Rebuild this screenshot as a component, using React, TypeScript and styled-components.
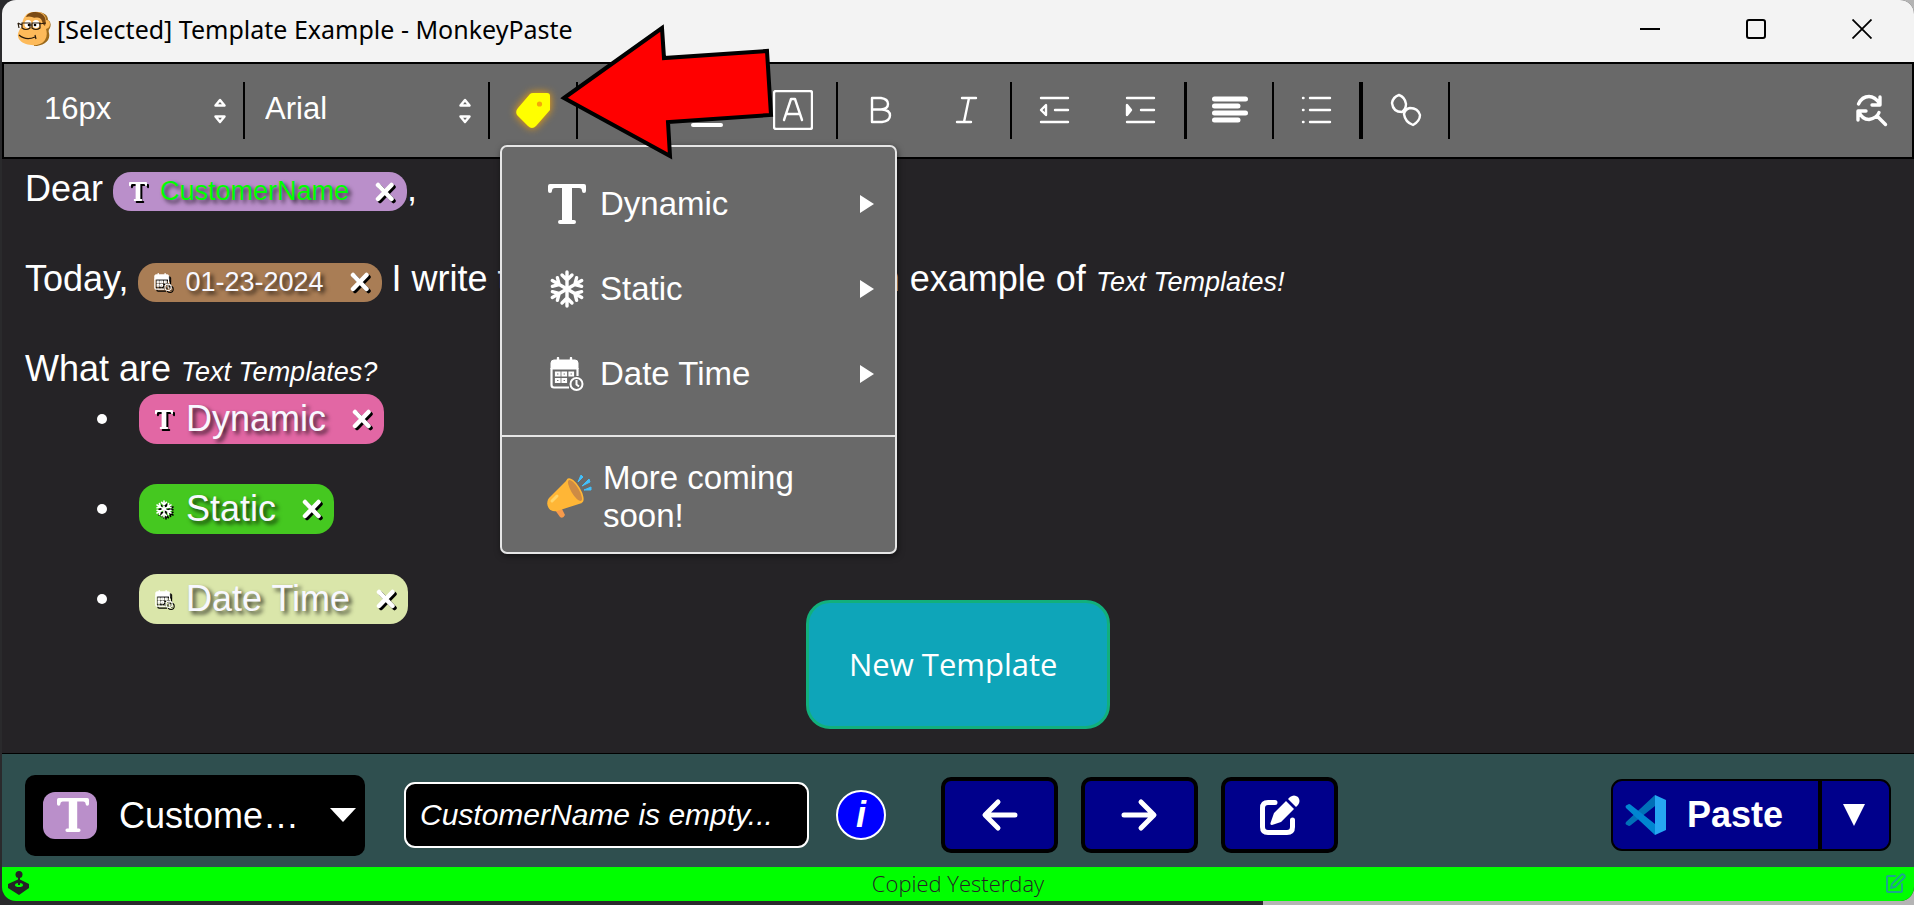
import React from 'react';
import styled, { createGlobalStyle } from 'styled-components';

const sans = '"Liberation Sans", Arial, sans-serif';
const ui = '"Noto Sans", "Segoe UI", sans-serif';
const rounded = '"Open Sans", Nunito, sans-serif';

const Global = createGlobalStyle`
  *, *::before, *::after { box-sizing: border-box; }
  body { margin: 0; background: #1f1f1f; }
  button, input, select { font-family: inherit; color: inherit; margin: 0; }
  p, ul { margin: 0; padding: 0; }
`;

const Desktop = styled.div`
  display: flex;
  min-height: 100vh;
  padding: 0 0 4px 2px;
  background: linear-gradient(to right, #2a2a2c 66%, #b4b4b4 66%);
  font-family: ${sans};
  color: #fff;
`;

const Window = styled.main`
  position: relative;
  flex: 1;
  min-width: 0;
  display: flex;
  flex-direction: column;
  overflow: hidden;
  border-radius: 14px;
  background: #252326;
`;

const TitleBar = styled.header`
  display: flex;
  align-items: center;
  height: 62px;
  padding: 0 21px 4px 15px;
  background: #f3f3f3;
  color: #000;
`;

const Title = styled.h1`
  flex: 1;
  margin: 0;
  padding-left: 6px;
  font: 400 25px/58px ${ui};
  white-space: nowrap;
`;

const WindowButton = styled.button`
  display: grid;
  place-items: center;
  width: 106px;
  height: 58px;
  padding: 0;
  border: 0;
  background: none;
  &:last-child { width: 84px; padding-left: 22px; }
`;

const Toolbar = styled.div`
  display: flex;
  align-items: center;
  height: 97px;
  padding-right: 22px;
  border: 2px solid #000;
  background: #696969;
`;

const Group = styled.div<{ $edge?: number }>`
  display: flex;
  align-items: center;
  height: 57px;
  border-right: ${p => p.$edge ?? 2}px solid #000;
`;

const Tool = styled.button<{ $narrow?: boolean }>`
  display: grid;
  place-items: center;
  width: ${p => (p.$narrow ? 85 : 86)}px;
  height: 57px;
  padding: 0 0 2px;
  border: 0;
  background: none;
`;

const Picker = styled.label<{ $w: number; $pad: number }>`
  display: grid;
  grid-template-columns: 1fr auto;
  align-items: center;
  width: ${p => p.$w}px;
  padding-right: 16px;
  select {
    grid-area: 1 / 1 / 2 / 3;
    appearance: none;
    width: 100%;
    height: 57px;
    padding: 0 24px 4px ${p => p.$pad}px;
    border: 0;
    background: none;
    font-size: 31px;
  }
  svg { grid-area: 1 / 2; pointer-events: none; }
`;

const Spacer = styled.div`
  flex: 1;
`;

const Editor = styled.section`
  position: relative;
  flex: 1;
  padding: 5px 23px 40px;
  font-size: 36px;
  line-height: 50px;
`;

const Line = styled.p`
  display: flex;
  align-items: baseline;
  height: 50px;
  margin-bottom: 40px;
  white-space: pre;
  &:last-of-type { margin-bottom: 0; }
`;

const Small = styled.em`
  font-size: 27px;
`;

const List = styled.ul`
  display: grid;
  gap: 40px;
  padding-left: 72px;
  list-style: none;
`;

const Item = styled.li`
  display: flex;
  align-items: center;
  height: 50px;
  &::before {
    content: '';
    width: 10px;
    height: 10px;
    margin-right: 32px;
    border-radius: 50%;
    background: #fff;
  }
`;

const PillBox = styled.span<{ $bg: string; $fg: string; $small?: boolean }>`
  display: inline-flex;
  align-items: center;
  padding: 0 12px 0 16px;
  border-radius: 18px;
  background: ${p => p.$bg};
  color: ${p => p.$fg};
  font-size: ${p => (p.$small ? 27 : 36)}px;
  line-height: ${p => (p.$small ? 39 : 50)}px;
  text-shadow: 3px 3px 4px rgba(0, 0, 0, 0.75);
  svg { filter: drop-shadow(2px 2px 0 #000); color: #fff; display: block; }
`;

const PillText = styled.span`
  padding: 0 26px 0 13px;
`;

const PillClose = styled.button`
  padding: 0;
  border: 0;
  background: none;
`;

const Menu = styled.div`
  position: absolute;
  top: 145px;
  left: 498px;
  width: 397px;
  padding: 14px 0 0;
  border: 2px solid #e6e6e6;
  border-radius: 7px;
  background: #696969;
  box-shadow: 1px 2px 6px rgba(0, 0, 0, 0.5);
`;

const MenuItem = styled.button`
  display: grid;
  grid-template-columns: 38px 1fr 14px;
  align-items: center;
  gap: 14px;
  width: 100%;
  height: 85px;
  padding: 0 21px 0 46px;
  border: 0;
  background: none;
  font-size: 33px;
  text-align: left;
  svg { justify-self: center; }
`;

const MenuNote = styled.div`
  display: flex;
  align-items: center;
  gap: 11px;
  height: 117px;
  margin-top: 19px;
  padding: 4px 80px 0 44px;
  border-top: 2px solid #e6e6e6;
  font-size: 33px;
  line-height: 38px;
  svg { flex: none; }
`;

const Pointer = styled.svg`
  position: absolute;
  top: 20px;
  left: 554px;
  pointer-events: none;
`;

const Callout = styled.div`
  position: absolute;
  bottom: 24px;
  left: 50%;
  transform: translateX(-50%);
  width: 304px;
  padding: 0 40px;
  border: 3px solid #12b07c;
  border-radius: 24px;
  background: #0ea5b9;
  font: 400 31px/123px ${rounded};
  white-space: nowrap;
`;

const Dock = styled.section`
  display: flex;
  align-items: center;
  height: 114px;
  padding: 9px 23px 0;
  border-top: 1px solid #000;
  background: #2f4f4f;
`;

const TemplateSelect = styled.label`
  display: grid;
  grid-template-columns: 54px 1fr auto;
  align-items: center;
  width: 340px;
  height: 81px;
  padding: 0 9px 0 18px;
  border-radius: 10px;
  background: #000;
  select {
    grid-area: 1 / 1 / 2 / 4;
    appearance: none;
    width: 100%;
    height: 81px;
    padding: 0 52px 0 76px;
    border: 0;
    background: none;
    font-size: 36px;
    text-overflow: ellipsis;
  }
  > svg { grid-area: 1 / 3; pointer-events: none; }
`;

const Badge = styled.span`
  grid-area: 1 / 1;
  display: grid;
  place-items: center;
  height: 47px;
  padding-left: 6px;
  border-radius: 12px;
  background: #ba8fca;
  pointer-events: none;
`;

const ValueInput = styled.input`
  width: 405px;
  height: 66px;
  margin-left: 39px;
  padding: 0 14px;
  border: 2px solid #fff;
  border-radius: 11px;
  background: #000;
  font-size: 30px;
  font-style: italic;
  &::placeholder { color: #fff; opacity: 1; }
`;

const Info = styled.button`
  width: 50px;
  height: 50px;
  padding: 0;
  border: 2px solid #fff;
  border-radius: 50%;
  background: #00f;
  font: italic 700 36px/44px ${sans};
`;

const NavButtons = styled.div`
  display: flex;
  gap: 23px;
  margin-left: 55px;
`;

const NavButton = styled.button`
  display: grid;
  place-items: center;
  width: 117px;
  height: 76px;
  padding: 0;
  border: 4px solid #000;
  border-radius: 10px;
  background: #00008b;
`;

const InfoSlot = styled.div`
  margin-left: 27px;
`;

const PasteGroup = styled.div`
  display: flex;
  height: 72px;
  border: 2px solid #000;
  border-radius: 11px;
  background: #00008b;
  overflow: hidden;
`;

const PasteButton = styled.button`
  display: flex;
  align-items: center;
  gap: 20px;
  padding: 0 35px 0 12px;
  border: 0;
  border-right: 4px solid #000;
  background: none;
  font-size: 36px;
  font-weight: 700;
`;

const PasteMore = styled.button`
  display: grid;
  place-items: center;
  width: 67px;
  padding: 0 4px 0 0;
  border: 0;
  background: none;
`;

const Status = styled.footer`
  display: grid;
  grid-template-columns: 22px 1fr 22px;
  align-items: center;
  height: 34px;
  padding: 0 6px 2px;
  background: #0f0;
  color: #252326;
  font: 300 22px/32px ${rounded};
  text-align: center;
`;

const SerifT = ({ w, h }: { w: number; h: number }) => (
  <svg width={w} height={h} viewBox="0 0 38 40" preserveAspectRatio="none" fill="currentColor">
    <path d="M2 0H36Q38 0 38 2V7Q38 9 36 9T34 7Q34 4 31 4H24V36H26Q28 36 28 38T26 40H12Q10 40 10 38T12 36H14V4H7Q4 4 4 7Q4 9 2 9T0 7V2Q0 0 2 0Z" />
  </svg>
);

const Snow = ({ s }: { s: number }) => (
  <svg width={s} height={s} viewBox="0 0 38 38" fill="none" stroke="currentColor" strokeWidth="3.4" strokeLinecap="round">
    {[0, 60, 120, 180, 240, 300].map(a => (
      <path key={a} transform={`rotate(${a} 19 19)`} d="M19 19V2M14 5L19 10L24 5" />
    ))}
  </svg>
);

const Calendar = ({ s }: { s: number }) => (
  <svg width={s} height={s} viewBox="0 0 34 34" fill="none" stroke="currentColor">
    <path d="M8 1V5M21 1V5" strokeWidth="2.4" strokeLinecap="round" />
    <path d="M1 12V6Q1 3 4 3H25Q28 3 28 6V12Z" fill="currentColor" strokeWidth="1" />
    <path d="M1.5 11V28Q1.5 30.5 4 30.5H19M27.5 11V19" strokeWidth="2.2" />
    <path d="M6 15.5H9.5V18.500H6ZM12.500 15.500H16V18.500H12.500ZM19.500 15.500H23V18.500H19.500ZM6 22H9.500V25H6ZM12.500 22H16V25H12.500Z" strokeWidth="2.2" />
    <circle cx="26.5" cy="27" r="6" strokeWidth="2" />
    <path d="M26.5 23V27.5L29 29.5" strokeWidth="2" />
  </svg>
);

const Cross = () => (
  <svg width="20" height="20" viewBox="0 0 20 20" fill="none" stroke="currentColor" strokeWidth="4.5" strokeLinecap="round">
    <path d="M3 3L16.5 17M16.5 3L3 17" />
  </svg>
);

const UpDown = () => (
  <svg width="14" height="28" viewBox="0 0 14 28" fill="none" stroke="#fff" strokeWidth="2.5" strokeLinejoin="round">
    <path d="M2.5 8.5L7 3L11.5 8.5ZM2.5 19.5L7 25L11.5 19.5Z" />
  </svg>
);

const ToolIcon = ({ children, sw = 2.4 }: { children: React.ReactNode; sw?: number }) => (
  <svg width="40" height="40" viewBox="0 0 40 40" fill="none" stroke="#fff" strokeWidth={sw} strokeLinecap="round" strokeLinejoin="round">
    {children}
  </svg>
);

const TagIcon = styled.svg`
  filter: drop-shadow(0 0 4px orange);
`;

const Play = () => (
  <svg width="14" height="18" viewBox="0 0 14 18" fill="#fff"><path d="M0 0L14 9L0 18Z" /></svg>
);

const Monkey = () => (
  <svg width="34" height="36" viewBox="0 0 34 36">
    <path d="M19 1C27 1 31 4 31 9Q35 11 33 17Q31 19 32 22C34 30 26 35 17 35Z" fill="#9c6a1c" />
    <path d="M17 1C26 0 29 5 29 9Q33 9 33 13T29 18Q31 24 28 29C24 35 15 35 9 33C2 31 -1 25 2 20Q3 17 5 16C5 7 9 1 17 1Z" fill="#fdba5a" />
    <path d="M9 6C11 0 23 -1 27 5C29 8 29 12 28 15Q25 13 25 10C23 4 18 8 15 6Q12 5 9 6Z" fill="#7b4b15" />
    <ellipse cx="11" cy="13" rx="3.5" ry="4" fill="#fff" /><ellipse cx="19" cy="13" rx="3.5" ry="4" fill="#fff" />
    <circle cx="12" cy="14" r="1.3" /><circle cx="18" cy="14" r="1.3" />
    <path d="M1 12L5 14M22 13L29 12M13 14H15M1 12L2 17M5 12H13V17Q9 20 5 17ZM15 12H23V17Q19 20 15 17ZM2 24Q9 30 18 26M18 24L19 28" fill="none" stroke="#2b1c0c" strokeWidth="1.2" />
  </svg>
);

const Megaphone = () => (
  <svg width="46" height="44" viewBox="0 0 46 44">
    <path d="M9 35L14 42Q17 44 19 40L15 32Z" fill="#f79a4b" />
    <path d="M22 4L3 23C-1 28 2 38 11 36L36 28Z" fill="#ffb636" />
    <ellipse cx="29" cy="15.500" rx="5.500" ry="14" transform="rotate(-31 29 15.500)" fill="#ffb636" />
    <ellipse cx="29" cy="15.500" rx="3.800" ry="12" transform="rotate(-31 29 15.500)" fill="#ce8b44" />
    <path d="M6 26L11 21" stroke="#ffd469" strokeWidth="3" strokeLinecap="round" />
    <path d="M32 7L35 0L37 2ZM36 11L43 4L44 7ZM38 15L45 12V15Z" fill="#42c0fb" stroke="#42c0fb" />
  </svg>
);

type PillProps = { bg: string; fg?: string; small?: boolean; icon: React.ReactNode; text: string };
const Pill = ({ bg, fg = '#f8f8ff', small, icon, text }: PillProps) => (
  <PillBox $bg={bg} $fg={fg} $small={small}>
    {icon}
    <PillText>{text}</PillText>
    <PillClose aria-label={`Remove ${text}`}><Cross /></PillClose>
  </PillBox>
);

export default function App() {
  return (
    <Desktop>
      <Global />
      <Window>
        <TitleBar>
          <Monkey />
          <Title>[Selected] Template Example - MonkeyPaste</Title>
          <WindowButton aria-label="Minimize">
            <svg width="20" height="20"><path d="M0 10H20" stroke="#000" strokeWidth="2" /></svg>
          </WindowButton>
          <WindowButton aria-label="Maximize">
            <svg width="20" height="20"><rect x="1" y="1" width="18" height="18" rx="2" fill="none" stroke="#000" strokeWidth="2" /></svg>
          </WindowButton>
          <WindowButton aria-label="Close">
            <svg width="20" height="20"><path d="M0.5 0.5L19.5 19.5M19.5 0.5L0.5 19.5" stroke="#000" strokeWidth="1.8" /></svg>
          </WindowButton>
        </TitleBar>

        <Toolbar>
          <Group>
            <Picker $w={239} $pad={40}>
              <select aria-label="Font size"><option>16px</option></select>
              <UpDown />
            </Picker>
          </Group>
          <Group>
            <Picker $w={243} $pad={20}>
              <select aria-label="Font family"><option>Arial</option></select>
              <UpDown />
            </Picker>
          </Group>
          <Group>
            <Tool aria-label="Templates">
              <TagIcon width="60" height="56" viewBox="0 0 60 56">
                <path d="M30 11H44Q47 11 47 14V28L33 44Q29 48 25 44L14 33Q12 29 15 26L27 12Q28 11 30 11Z" fill="#ff0" />
                <circle cx="36.5" cy="22" r="2.6" fill="#f5a70a" />
              </TagIcon>
            </Tool>
          </Group>
          <Group>
            <Tool aria-label="Font color">
              <ToolIcon><path d="M12 28L20 6L28 28M15 20H25" /></ToolIcon>
            </Tool>
            <Tool aria-label="Highlight color">
              <ToolIcon sw={4}><path d="M6 35H34" /></ToolIcon>
            </Tool>
            <Tool aria-label="Background color">
              <ToolIcon>
                <rect x="1" y="1" width="38" height="38" rx="2" />
                <path d="M11 30L18 9H22L29 30M13.500 24H26.500" />
              </ToolIcon>
            </Tool>
          </Group>
          <Group>
            <Tool aria-label="Bold">
              <ToolIcon><path d="M11 8V32H21Q29 31 29 25.500T21 19.500H11M11 8H20Q27 9 27 14T20 19.500" /></ToolIcon>
            </Tool>
            <Tool aria-label="Italic">
              <ToolIcon><path d="M15 8H29M10 32H24M22 8L17 32" /></ToolIcon>
            </Tool>
          </Group>
          <Group $edge={3}>
            <Tool aria-label="Outdent">
              <ToolIcon><path d="M6 8H33M20 20H33M6 32H33M11 15V25L6 20Z" /></ToolIcon>
            </Tool>
            <Tool aria-label="Indent">
              <ToolIcon><path d="M6 8H33M20 20H33M6 32H33" /><path d="M6 15V25L10 20Z" fill="#fff" /></ToolIcon>
            </Tool>
          </Group>
          <Group>
            <Tool $narrow aria-label="Align">
              <ToolIcon sw={5}><path d="M4.500 9H35.500M4.500 16H28M4.500 23H35.500M4.500 30H28" /></ToolIcon>
            </Tool>
          </Group>
          <Group $edge={4}>
            <Tool $narrow aria-label="Bullet list">
              <ToolIcon><path d="M13 8H33M13 20H33M13 32H33M6 8H6.500M6 20H6.500M6 32H6.500" /></ToolIcon>
            </Tool>
          </Group>
          <Group>
            <Tool $narrow aria-label="Link">
              <ToolIcon>
                <path d="M13 5Q19 7 20 14Q20 19 16 22Q7 22 6 13Q7 7 13 5ZM24 18Q32 18 34 25Q34 31 27 35Q19 32 18 24Q19 19 24 18Z" />
              </ToolIcon>
            </Tool>
          </Group>
          <Spacer />
          <svg width="36" height="36" viewBox="0 0 36 36" fill="none" stroke="#fff" strokeWidth="3.4" strokeLinecap="round" strokeLinejoin="round">
            <path d="M4.500 11Q8 3.500 15 3.500Q21 3.500 26 11M26 4V12H18M4 27V18H12M4.500 18Q8 26.500 15 26.500Q23 25 25 19.500M23.500 23.500L31.500 31.500" />
          </svg>
        </Toolbar>

        <Editor>
          <Line>
            {'Dear '}
            <Pill small bg="#ba8fca" fg="#00ff00" icon={<SerifT w={18} h={19} />} text="CustomerName" />
            ,
          </Line>
          <Line>
            {'Today, '}
            <Pill small bg="#a97d55" icon={<Calendar s={18} />} text="01-23-2024" />
            <span>{' I write this message to share an example of '}</span>
            <Small>Text Templates!</Small>
          </Line>
          <Line>
            <span>{'What are '}</span>
            <Small>Text Templates?</Small>
          </Line>
          <List>
            <Item><Pill bg="#e267a4" icon={<SerifT w={18} h={19} />} text="Dynamic" /></Item>
            <Item><Pill bg="#45c820" icon={<Snow s={18} />} text="Static" /></Item>
            <Item><Pill bg="#dae6aa" icon={<Calendar s={18} />} text="Date Time" /></Item>
          </List>
          <Callout>New Template</Callout>
        </Editor>

        <Dock>
          <TemplateSelect>
            <select aria-label="Template"><option>CustomerName</option></select>
            <Badge><SerifT w={32} h={34} /></Badge>
            <svg width="26" height="14" fill="#fff"><path d="M0 0H26L13 14Z" /></svg>
          </TemplateSelect>
          <ValueInput aria-label="Template value" placeholder="CustomerName is empty..." />
          <InfoSlot><Info aria-label="Information">i</Info></InfoSlot>
          <NavButtons>
            <NavButton aria-label="Previous template">
              <ToolIcon sw={5}><path d="M35 20H6M18 7L5 20L18 33" /></ToolIcon>
            </NavButton>
            <NavButton aria-label="Next template">
              <ToolIcon sw={5}><path d="M4 20H33M21 7L34 20L21 33" /></ToolIcon>
            </NavButton>
            <NavButton aria-label="Edit template">
              <svg width="40" height="40" viewBox="0 0 40 40">
                <path d="M15 7.500H8Q2.500 7.500 2.500 13V32Q2.500 37.500 8 37.500H27Q32.500 37.500 32.500 32V25" fill="none" stroke="#fff" strokeWidth="5" strokeLinecap="round" />
                <path d="M26 6L34 14L21 27L12 30Q10 30 10.500 28L14 18ZM28 4L30 2Q34 -1 38 2Q41 6 38 10L36 12Z" fill="#fff" />
              </svg>
            </NavButton>
          </NavButtons>
          <Spacer />
          <PasteGroup>
            <PasteButton>
              <svg width="42" height="40" viewBox="0 0 42 40">
                <path d="M30 0L1 27Q0 28.500 1 29.500L4 31Q5 31 6 30L30 11Z" fill="#0070b8" />
                <path d="M30 40L1 13Q0 11.500 1 10.500L4 9Q5 9 6 10L30 29Z" fill="#0086d1" />
                <path d="M30 0L41 5V35L30 40Z" fill="#26a7f2" />
              </svg>
              Paste
            </PasteButton>
            <PasteMore aria-label="Paste options">
              <svg width="22" height="22" fill="#fff"><path d="M0 0H22L11 22Z" /></svg>
            </PasteMore>
          </PasteGroup>
        </Dock>

        <Status>
          <svg width="22" height="24" viewBox="0 0 22 24" fill="#252326">
            <path d="M11 8L21 13V17L11 24L0 17V13Z" />
            <ellipse cx="11" cy="14" rx="4" ry="2" fill="#0f0" />
            <path d="M10 5H12V14H10Z" />
            <circle cx="11" cy="3.500" r="3.500" />
          </svg>
          <span>Copied Yesterday</span>
          <svg width="20" height="20" viewBox="0 0 20 20" fill="none" stroke="#1ba68c" strokeWidth="2" strokeLinejoin="round" strokeLinecap="round">
            <path d="M9 3H2Q1 3 1 4V18Q1 19 2 19H15Q16 19 16 18V11M6 11L15 2Q16.500 .5 18 2T18 5L9 14L5 15Z" />
          </svg>
        </Status>

        <Menu role="menu">
          <MenuItem role="menuitem"><SerifT w={38} h={40} />Dynamic<Play /></MenuItem>
          <MenuItem role="menuitem"><Snow s={38} />Static<Play /></MenuItem>
          <MenuItem role="menuitem"><Calendar s={34} />Date Time<Play /></MenuItem>
          <MenuNote><Megaphone />More coming soon!</MenuNote>
        </Menu>

        <Pointer width="230" height="144" viewBox="0 0 230 144">
          <path d="M8 78L106 8L108 38L211 31L215 95L112 102L114 136Z" fill="#f00" stroke="#000" strokeWidth="4" />
        </Pointer>
      </Window>
    </Desktop>
  );
}
